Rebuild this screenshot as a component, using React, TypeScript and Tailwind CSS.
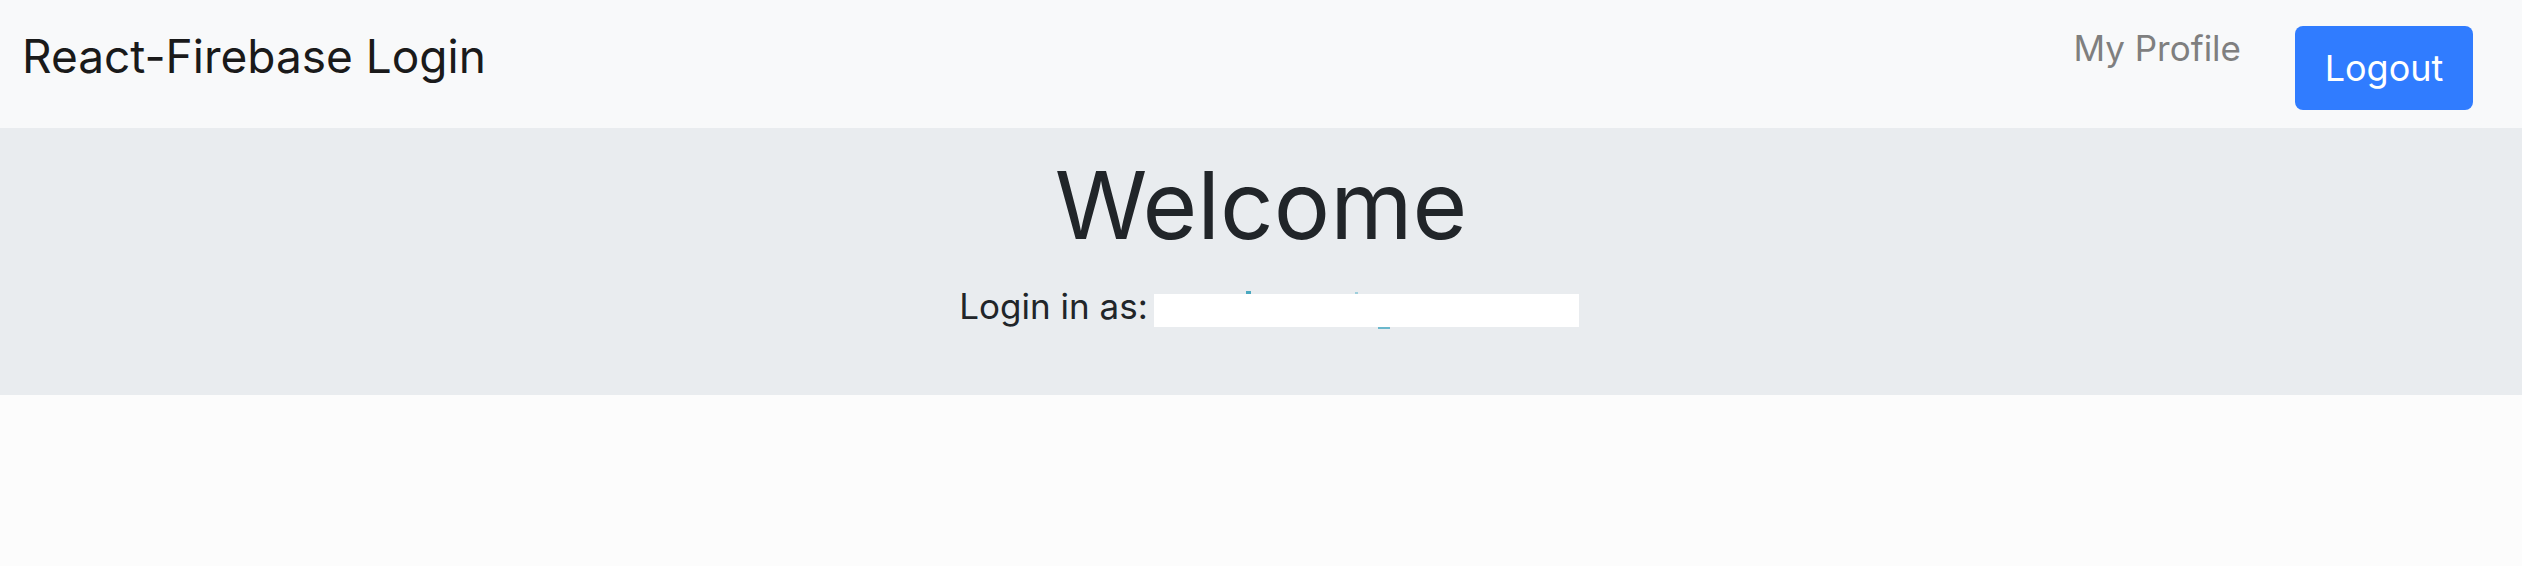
export default function App() {
  return (
    <div className="min-h-[566px] bg-[#fcfcfc] font-['Inter',sans-serif]">
      <nav className="flex h-[128px] items-start justify-between bg-[#f8f9fa] pl-[22px] pr-[49px]">
        <a href="#" className="mt-[33px] text-[46px] leading-none text-[#1a1a1a]">
          React-Firebase Login
        </a>
        <div className="flex items-start gap-[54px]">
          <a href="#" className="mt-[31px] text-[35px] leading-none text-[#7f7f7f]">
            My Profile
          </a>
          <button className="mt-[26px] h-[84px] w-[178px] rounded-[8px] bg-[#307cff] text-[36px] leading-none text-white">
            Logout
          </button>
        </div>
      </nav>

      <section className="flex h-[267px] flex-col items-center bg-[#e9ecef] text-[#212529]">
        <h1 className="mt-[30px] text-[94px] font-normal leading-none">Welcome</h1>
        <p className="ml-[16px] mt-[37px] flex items-start text-[35px] leading-none">
          <span>Login in as:</span>
          {/* redacted email */}
          <span className="relative ml-[6px] mt-[5px] inline-block h-[33px] w-[425px] bg-white">
            <span className="absolute left-[92px] top-[-3px] h-[3px] w-[5px] bg-[#4aa8c0]" />
            <span className="absolute left-[201px] top-[-2px] h-[2px] w-[3px] bg-[#9fcfdc]" />
            <span className="absolute left-[224px] bottom-[-2px] h-[2px] w-[12px] bg-[#6bb8cc]" />
          </span>
        </p>
      </section>
    </div>
  )
}
